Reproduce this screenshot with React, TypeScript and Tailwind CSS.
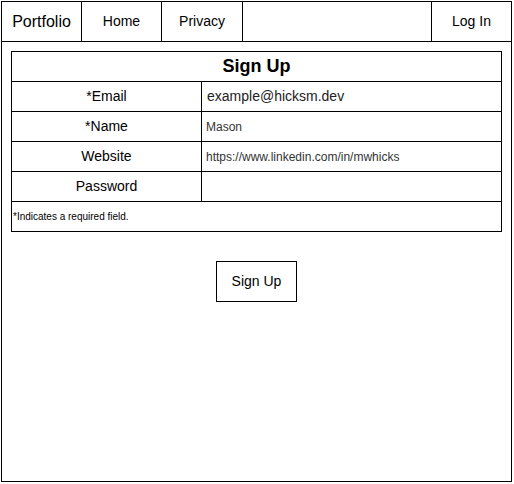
import React from 'react'

const rows = [
  { label: '*Email', value: 'example@hicksm.dev', size: 'text-[14px] text-[#222] pl-[5px]' },
  { label: '*Name', value: 'Mason', size: 'text-[12px] text-[#333] pl-[4px]' },
  { label: 'Website', value: 'https://www.linkedin.com/in/mwhicks', size: 'text-[12px] text-[#333] pl-[4px]' },
  { label: 'Password', value: '', size: 'text-[12px] text-[#333] pl-[4px]' },
]

function NavBar() {
  return (
    <nav className="flex h-10 border-b border-black">
      <div className="w-20 flex items-center justify-center border-r border-black text-[16px]">Portfolio</div>
      <div className="w-20 flex items-center justify-center border-r border-black text-[14px]">Home</div>
      <div className="w-[81px] flex items-center justify-center border-r border-black text-[14px]">Privacy</div>
      <div className="flex-1 border-r border-black"></div>
      <div className="w-[79px] flex items-center justify-center text-[14px]">Log In</div>
    </nav>
  )
}

export default function App() {
  return (
    <div className="p-px bg-white text-black" style={{ fontFamily: '"Liberation Sans", Arial, sans-serif' }}>
      <div className="w-[511px] h-[481px] border border-black flex flex-col">
        <NavBar />
        {/* SIGN UP FORM */}
        <div className="ml-[9px] mt-[9px] w-[491px] border border-black">
          <div className="h-[30px] flex items-center justify-center border-b border-black text-[18px] font-bold">Sign Up</div>
          {rows.map((row) => (
            <div key={row.label} className="flex h-[30px] border-b border-black">
              <div className="w-[190px] flex items-center justify-center border-r border-black text-[14px]">{row.label}</div>
              <div className={`flex-1 flex items-center ${row.size}`}>{row.value}</div>
            </div>
          ))}
          <div className="h-[29px] flex items-center pl-px text-[10px]">*Indicates a required field.</div>
        </div>
        <div className="flex justify-center mt-[29px] ml-[9px] w-[491px]">
          <button className="w-[81px] h-[41px] border border-black text-[14px] flex items-center justify-center">Sign Up</button>
        </div>
      </div>
    </div>
  )
}
